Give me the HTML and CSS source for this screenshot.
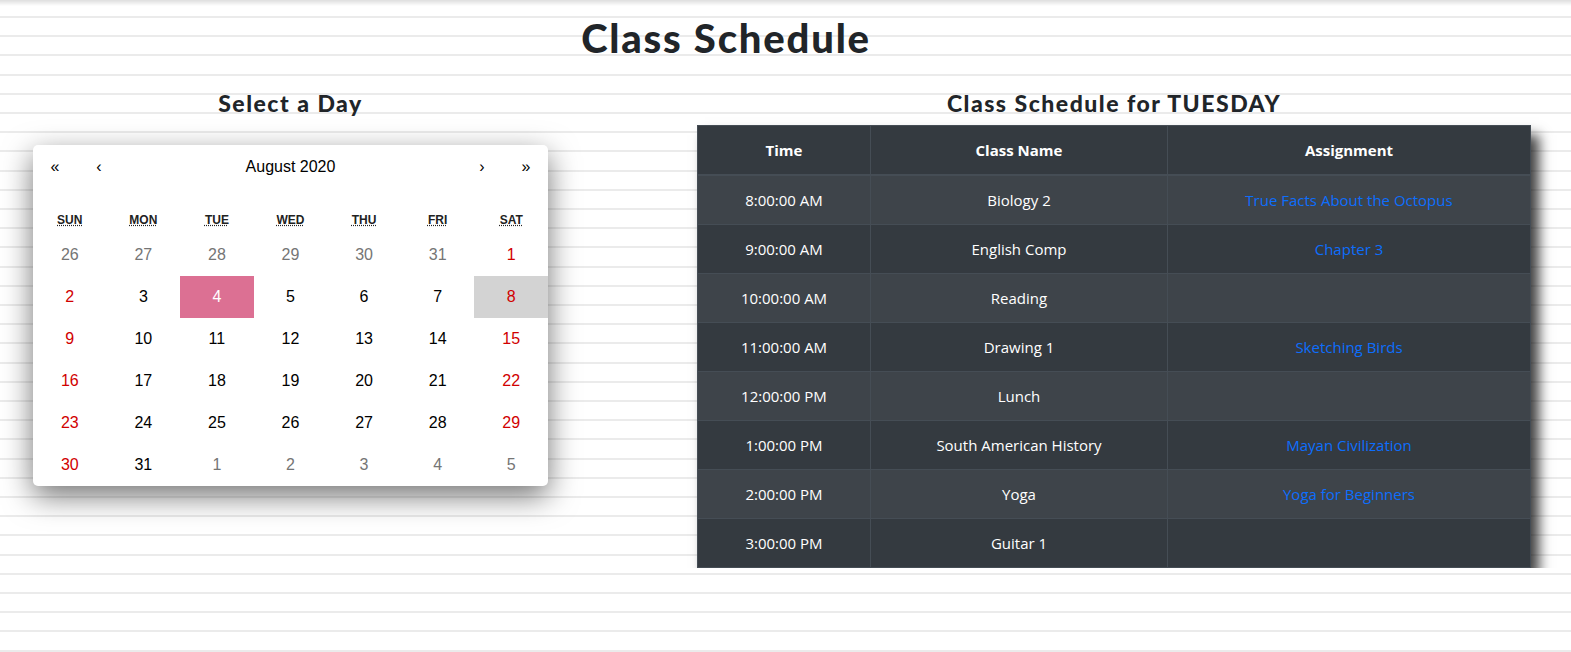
FILE: index.html
```html
<!DOCTYPE html>
<html lang="en">
<head>
<meta charset="utf-8">
<title>Class Schedule</title>
<link rel="stylesheet" href="styles.css">
</head>
<body>
<h1 class="page-title">Class Schedule</h1>
<div class="main">
  <section class="col col-left">
    <h2 class="col-title">Select a Day</h2>
    <div class="calendar">
      <div class="cal-nav">
        <button class="nav-btn">«</button>
        <button class="nav-btn">‹</button>
        <span class="nav-label">August 2020</span>
        <button class="nav-btn">›</button>
        <button class="nav-btn">»</button>
      </div>
      <div class="weekdays">
        <div class="wd"><abbr title="Sunday">Sun</abbr></div>
        <div class="wd"><abbr title="Monday">Mon</abbr></div>
        <div class="wd"><abbr title="Tuesday">Tue</abbr></div>
        <div class="wd"><abbr title="Wednesday">Wed</abbr></div>
        <div class="wd"><abbr title="Thursday">Thu</abbr></div>
        <div class="wd"><abbr title="Friday">Fri</abbr></div>
        <div class="wd"><abbr title="Saturday">Sat</abbr></div>
      </div>
      <div class="days">
        <div class="tile other">26</div>
        <div class="tile other">27</div>
        <div class="tile other">28</div>
        <div class="tile other">29</div>
        <div class="tile other">30</div>
        <div class="tile other">31</div>
        <div class="tile weekend">1</div>

        <div class="tile weekend">2</div>
        <div class="tile">3</div>
        <div class="tile active">4</div>
        <div class="tile">5</div>
        <div class="tile">6</div>
        <div class="tile">7</div>
        <div class="tile weekend hover">8</div>

        <div class="tile weekend">9</div>
        <div class="tile">10</div>
        <div class="tile">11</div>
        <div class="tile">12</div>
        <div class="tile">13</div>
        <div class="tile">14</div>
        <div class="tile weekend">15</div>

        <div class="tile weekend">16</div>
        <div class="tile">17</div>
        <div class="tile">18</div>
        <div class="tile">19</div>
        <div class="tile">20</div>
        <div class="tile">21</div>
        <div class="tile weekend">22</div>

        <div class="tile weekend">23</div>
        <div class="tile">24</div>
        <div class="tile">25</div>
        <div class="tile">26</div>
        <div class="tile">27</div>
        <div class="tile">28</div>
        <div class="tile weekend">29</div>

        <div class="tile weekend">30</div>
        <div class="tile">31</div>
        <div class="tile other">1</div>
        <div class="tile other">2</div>
        <div class="tile other">3</div>
        <div class="tile other">4</div>
        <div class="tile other">5</div>
      </div>
    </div>
  </section>
  <section class="col col-right">
    <h2 class="col-title">Class Schedule for TUESDAY</h2>
    <table class="schedule">
      <colgroup>
        <col class="c-time">
        <col class="c-name">
        <col class="c-assign">
      </colgroup>
      <thead>
        <tr><th>Time</th><th>Class Name</th><th>Assignment</th></tr>
      </thead>
      <tbody>
        <tr><td>8:00:00 AM</td><td>Biology 2</td><td><a href="#">True Facts About the Octopus</a></td></tr>
        <tr><td>9:00:00 AM</td><td>English Comp</td><td><a href="#">Chapter 3</a></td></tr>
        <tr><td>10:00:00 AM</td><td>Reading</td><td></td></tr>
        <tr><td>11:00:00 AM</td><td>Drawing 1</td><td><a href="#">Sketching Birds</a></td></tr>
        <tr><td>12:00:00 PM</td><td>Lunch</td><td></td></tr>
        <tr><td>1:00:00 PM</td><td>South American History</td><td><a href="#">Mayan Civilization</a></td></tr>
        <tr><td>2:00:00 PM</td><td>Yoga</td><td><a href="#">Yoga for Beginners</a></td></tr>
        <tr><td>3:00:00 PM</td><td>Guitar 1</td><td></td></tr>
      </tbody>
    </table>
  </section>
</div>
</body>
</html>
```
FILE: styles.css
```css
html {
  margin: 0;
  min-height: 100%;
  background:
    linear-gradient(to bottom, rgba(0,0,0,0.13), rgba(0,0,0,0) 6px),
    repeating-linear-gradient(to bottom, #ffffff 0, #ffffff 16px, #ebebeb 16px, #ebebeb 18px, #ffffff 18px, #ffffff 19.2px);
}
body {
  margin: 0;
  color: #212529;
  font-family: "Segoe UI", "Open Sans", sans-serif;
}
.page-title {
  margin: 14px 0 0;
  width: 1452px;
  text-align: center;
  font-family: Lato, sans-serif;
  font-weight: 900;
  font-size: 40px;
  line-height: 48px;
  letter-spacing: 1.8px;
  color: #212529;
}
.main {
  display: grid;
  grid-template-columns: 581px 918px;
  column-gap: 74px;
  margin-top: 26px;
}
.col {
  display: flex;
  flex-direction: column;
  align-items: center;
}
.col-title {
  margin: 0;
  font-family: Lato, sans-serif;
  font-weight: 900;
  font-size: 23px;
  line-height: 30px;
  letter-spacing: 1.5px;
  color: #212529;
}
/* Calendar */
.calendar {
  margin-top: 27px;
  width: 515px;
  background: #fff;
  border-radius: 5px;
  box-shadow: 0 10px 30px rgba(0,0,0,0.55);
  font-family: "Liberation Sans", Arial, sans-serif;
  font-size: 16px;
  color: #000;
}
.cal-nav {
  display: flex;
  height: 44px;
  margin-bottom: 16px;
}
.nav-btn {
  min-width: 44px;
  border: 0;
  background: none;
  font: inherit;
  color: #000;
  padding: 0;
}
.nav-label {
  flex: 1;
  display: flex;
  align-items: center;
  justify-content: center;
}
.weekdays {
  display: grid;
  grid-template-columns: repeat(7, 1fr);
  text-align: center;
  text-transform: uppercase;
  font-weight: bold;
  font-size: 12px;
  height: 29px;
  align-items: center;
}
.wd abbr {
  text-decoration: underline dotted;
  color: #222;
}
.days {
  display: grid;
  grid-template-columns: repeat(7, 1fr);
}
.tile {
  height: 42px;
  display: flex;
  align-items: center;
  justify-content: center;
  color: #000;
}
.tile.weekend { color: #d10000; }
.tile.other { color: #757575; }
.tile.active { background: #dc7093; color: #fff; }
.tile.hover { background: #d3d3d3; }
/* Table */
.schedule {
  margin-top: 7px;
  width: 833px;
  border-collapse: collapse;
  background: #343a40;
  color: #fff;
  font-size: 15px;
  box-shadow: 8px 10px 12px rgba(0,0,0,0.75);
  table-layout: fixed;
}
.c-time { width: 173px; }
.c-name { width: 297px; }
.c-assign { width: 363px; }
.schedule th,
.schedule td {
  border: 1px solid #454d55;
  text-align: center;
  vertical-align: middle;
  padding: 0 12px;
  height: 48px;
}
.schedule th {
  font-weight: 700;
  height: 48px;
  border-bottom-width: 2px;
}
.schedule tbody tr:nth-child(odd) {
  background: #3e444a;
}
.schedule a {
  color: #0d6efd;
  text-decoration: none;
}
```
